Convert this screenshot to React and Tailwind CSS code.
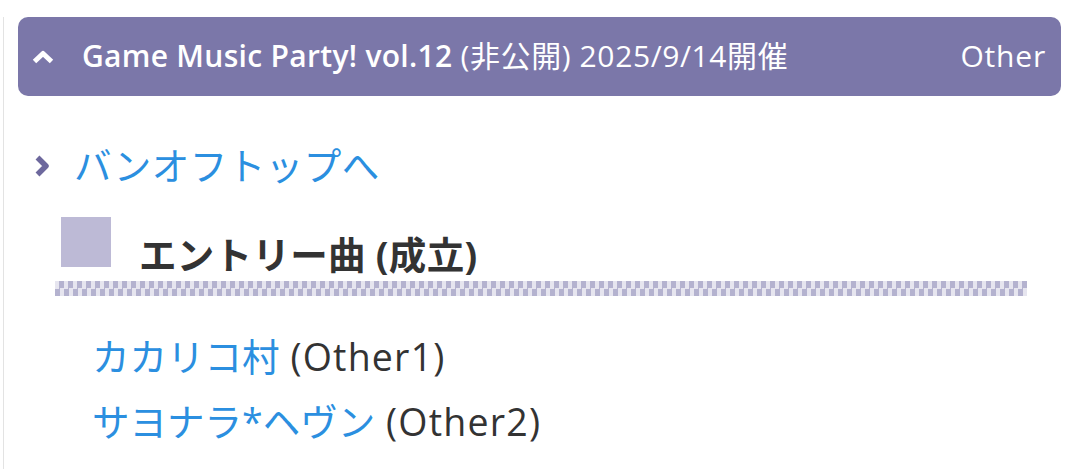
const ChevronUp = () => (
  <svg width="22" height="14" viewBox="0 0 22 14" className="shrink-0">
    <path d="M2.5 11.5 L11 3.5 L19.5 11.5" fill="none" stroke="#ffffff" strokeWidth="5" strokeLinejoin="round" />
  </svg>
);

const ChevronRight = () => (
  <svg width="16" height="24" viewBox="0 0 16 24" className="shrink-0">
    <path d="M3.5 3.5 L12 12 L3.5 20.5" fill="none" stroke="#6d689d" strokeWidth="5.5" strokeLinejoin="round" />
  </svg>
);

const songs = [
  { title: "カカリコ村", part: "(Other1)" },
  { title: "サヨナラ*ヘヴン", part: "(Other2)" },
];

export default function App() {
  return (
    <div
      className="min-h-screen bg-white ml-[3px] border-l border-[#e3e3e3] pb-6"
      style={{ fontFamily: '"Open Sans", "Noto Sans CJK JP", sans-serif' }}
    >
      {/* event header */}
      <div className="mt-[17px] ml-[14px] mr-[10px] h-[79px] rounded-[10px] bg-[#7b77a9] flex items-center pl-[14px] pr-[15px] text-white text-[30px] tracking-[0.3px]">
        <ChevronUp />
        <div className="ml-[28px] whitespace-nowrap leading-none pb-[2px]">
          <span className="font-semibold">Game Music Party! vol.12</span>{" "}
          <span className="tracking-[0.6px]">(非公開) 2025/9/14開催</span>
        </div>
        <div className="ml-auto tracking-[0.8px] leading-none pb-[2px]">Other</div>
      </div>

      <div className="mt-[42px] ml-[30px] flex items-center h-[56px] text-[37.5px]">
        <ChevronRight />
        <a className="ml-[24px] text-[#2b8fe0] tracking-[0.5px]" href="#">バンオフトップへ</a>
      </div>

      {/* entry section */}
      <div className="ml-[51px] mr-[44px]">
        <div className="flex items-start pl-[6px]">
          <div className="mt-[23px] w-[50px] h-[50px] bg-[#bdbad6]" />
          <h2 className="mt-[35px] ml-[28px] leading-[52px] text-[37.5px] font-bold text-[#333333] tracking-[0.3px]">
            エントリー曲 (成立)
          </h2>
        </div>
        <div className="h-[15px] bg-[conic-gradient(#b4b2cf_25%,#e6e5ef_0_50%,#b4b2cf_0_75%,#e6e5ef_0)] bg-[length:9px_15px]" />
      </div>

      <ul className="mt-[28px] ml-[88px] text-[37.5px]">
        {songs.map((s) => (
          <li key={s.title} className="leading-[65px] whitespace-nowrap">
            <a className="text-[#2b8fe0]" href="#">{s.title}</a>
            <span className="text-[#333333] tracking-[1.2px]"> {s.part}</span>
          </li>
        ))}
      </ul>
    </div>
  );
}
